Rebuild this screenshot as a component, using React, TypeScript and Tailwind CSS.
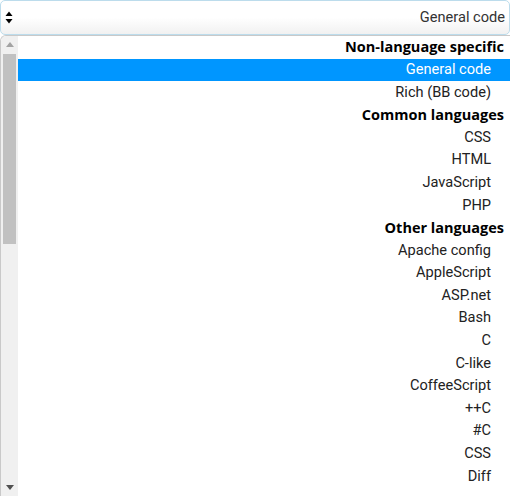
import React from "react";

type Row = { label: string; group?: boolean; selected?: boolean };

const rows: Row[] = [
  { label: "Non-language specific", group: true },
  { label: "General code", selected: true },
  { label: "Rich (BB code)" },
  { label: "Common languages", group: true },
  { label: "CSS" },
  { label: "HTML" },
  { label: "JavaScript" },
  { label: "PHP" },
  { label: "Other languages", group: true },
  { label: "Apache config" },
  { label: "AppleScript" },
  { label: "ASP.net" },
  { label: "Bash" },
  { label: "C" },
  { label: "C-like" },
  { label: "CoffeeScript" },
  { label: "++C" },
  { label: "#C" },
  { label: "CSS" },
  { label: "Diff" },
];

function SelectArrows() {
  return (
    <svg width="8" height="13" viewBox="0 0 8 13" className="text-black">
      <path d="M4 0.5 L7.5 5 L0.5 5 Z" fill="currentColor" />
      <path d="M4 12.5 L7.5 8 L0.5 8 Z" fill="currentColor" />
    </svg>
  );
}

export default function App() {
  return (
    <div className="w-[510px] h-[496px] bg-white overflow-hidden flex flex-col font-['Roboto',sans-serif] text-[14.6px]">
      {/* closed select */}
      <div className="h-[35px] shrink-0 flex items-center justify-between pl-[4px] pr-[4px] border border-[#bcdcec] rounded-[5px] bg-gradient-to-b from-white via-white to-[#f1f1f1]">
        <SelectArrows />
        <span className="text-[#333333]">General code</span>
      </div>

      {/* open listbox */}
      <div className="flex-1 min-h-0 flex border-t border-l border-[#c9c9c9] rounded-tl-[6px] overflow-hidden">
        {/* scrollbar (rtl: left side) */}
        <div className="w-[17px] shrink-0 bg-[#f0f0f0] flex flex-col items-center">
          <div className="h-[17px] w-full flex items-center justify-center">
            <svg width="8" height="5" viewBox="0 0 8 5">
              <path d="M4 0 L8 5 L0 5 Z" fill="#a3a3a3" />
            </svg>
          </div>
          <div className="w-[13px] h-[190px] bg-[#c1c1c1] mt-[1px]" />
          <div className="flex-1" />
          <div className="h-[17px] w-full flex items-center justify-center">
            <svg width="8" height="5" viewBox="0 0 8 5">
              <path d="M0 0 L8 0 L4 5 Z" fill="#505050" />
            </svg>
          </div>
        </div>

        <div className="flex-1 flex flex-col">
          {rows.map((r, i) => (
            <div
              key={i}
              className={`h-[22.6px] shrink-0 flex items-center justify-end ${
                r.group
                  ? "pr-[6px] font-['Open_Sans',sans-serif] font-bold text-[14.5px] text-black"
                  : "pr-[19px]"
              } ${r.selected ? "bg-[#0096ff] text-white" : r.group ? "" : "text-[#222222]"}`}
            >
              {r.label}
            </div>
          ))}
        </div>
      </div>
    </div>
  );
}
